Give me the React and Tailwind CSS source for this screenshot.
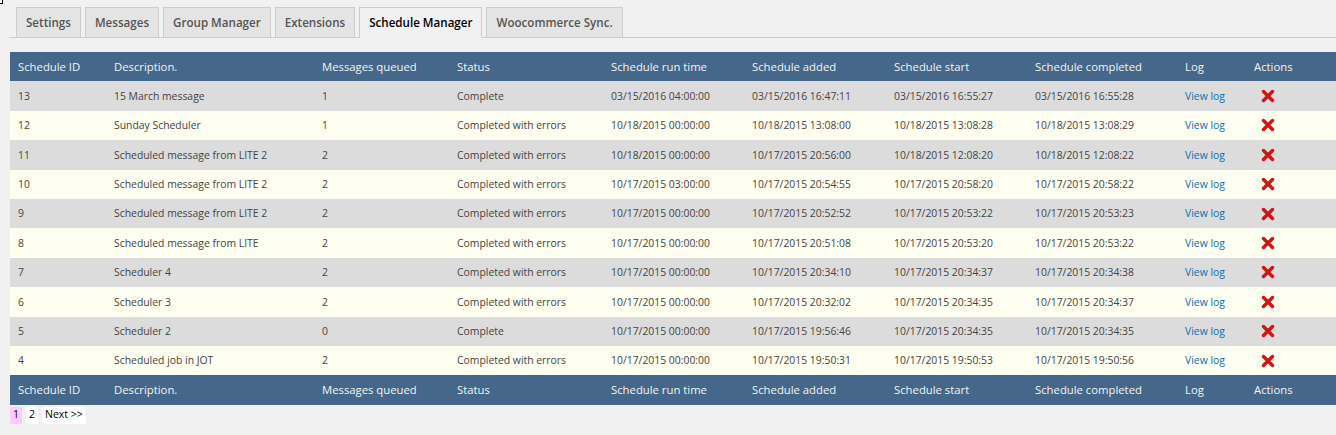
import React from 'react';

const tabs = ['Settings', 'Messages', 'Group Manager', 'Extensions', 'Schedule Manager', 'Woocommerce Sync.'];

const columns = [
  { label: 'Schedule ID', width: 'w-[96px]' },
  { label: 'Description.', width: 'w-[208px]' },
  { label: 'Messages queued', width: 'w-[135px]' },
  { label: 'Status', width: 'w-[154px]' },
  { label: 'Schedule run time', width: 'w-[141px]' },
  { label: 'Schedule added', width: 'w-[142px]' },
  { label: 'Schedule start', width: 'w-[141px]' },
  { label: 'Schedule completed', width: 'w-[150px]' },
  { label: 'Log', width: 'w-[69px]' },
  { label: 'Actions', width: 'w-[90px]' },
];

const schedules = [
  { id: 13, desc: '15 March message', queued: 1, status: 'Complete', run: '03/15/2016 04:00:00', added: '03/15/2016 16:47:11', start: '03/15/2016 16:55:27', done: '03/15/2016 16:55:28' },
  { id: 12, desc: 'Sunday Scheduler', queued: 1, status: 'Completed with errors', run: '10/18/2015 00:00:00', added: '10/18/2015 13:08:00', start: '10/18/2015 13:08:28', done: '10/18/2015 13:08:29' },
  { id: 11, desc: 'Scheduled message from LITE 2', queued: 2, status: 'Completed with errors', run: '10/18/2015 00:00:00', added: '10/17/2015 20:56:00', start: '10/18/2015 12:08:20', done: '10/18/2015 12:08:22' },
  { id: 10, desc: 'Scheduled message from LITE 2', queued: 2, status: 'Completed with errors', run: '10/17/2015 03:00:00', added: '10/17/2015 20:54:55', start: '10/17/2015 20:58:20', done: '10/17/2015 20:58:22' },
  { id: 9, desc: 'Scheduled message from LITE 2', queued: 2, status: 'Completed with errors', run: '10/17/2015 00:00:00', added: '10/17/2015 20:52:52', start: '10/17/2015 20:53:22', done: '10/17/2015 20:53:23' },
  { id: 8, desc: 'Scheduled message from LITE', queued: 2, status: 'Completed with errors', run: '10/17/2015 00:00:00', added: '10/17/2015 20:51:08', start: '10/17/2015 20:53:20', done: '10/17/2015 20:53:22' },
  { id: 7, desc: 'Scheduler 4', queued: 2, status: 'Completed with errors', run: '10/17/2015 00:00:00', added: '10/17/2015 20:34:10', start: '10/17/2015 20:34:37', done: '10/17/2015 20:34:38' },
  { id: 6, desc: 'Scheduler 3', queued: 2, status: 'Completed with errors', run: '10/17/2015 00:00:00', added: '10/17/2015 20:32:02', start: '10/17/2015 20:34:35', done: '10/17/2015 20:34:37' },
  { id: 5, desc: 'Scheduler 2', queued: 0, status: 'Complete', run: '10/17/2015 00:00:00', added: '10/17/2015 19:56:46', start: '10/17/2015 20:34:35', done: '10/17/2015 20:34:35' },
  { id: 4, desc: 'Scheduled job in JOT', queued: 2, status: 'Completed with errors', run: '10/17/2015 00:00:00', added: '10/17/2015 19:50:31', start: '10/17/2015 19:50:53', done: '10/17/2015 19:50:56' },
];

const DeleteIcon = () => (
  <svg width="14" height="14" viewBox="0 0 14 14" className="ml-[7px] block">
    <path d="M2.5 2.5 L11.5 11.5 M11.5 2.5 L2.5 11.5" stroke="#d11414" strokeWidth="3.4" strokeLinecap="round" />
  </svg>
);

const HeaderRow = () => (
  <tr className="bg-[#456789] h-[29.4px]">
    {columns.map(col => (
      <th key={col.label} className={`${col.width} px-2 pt-px text-left font-normal text-[11.3px] text-[#f4f4f4]`}>
        {col.label}
      </th>
    ))}
  </tr>
);

const App = () => {
  return (
    <div className="relative min-h-[435px] bg-[#f1f1f1] text-[#444] font-['Open_Sans',sans-serif]">
      <div className="absolute left-0 top-0 w-[3px] h-[4px] border-r border-b border-black" />

      {/* Tabs */}
      <div className="ml-[9px] pt-[7px] flex border-b border-[#cccccc]">
        <div className="flex gap-[4px] ml-[7px] -mb-px">
          {tabs.map(tab => {
            const active = tab === 'Schedule Manager';
            return (
              <div
                key={tab}
                className={`h-[31px] px-[9px] flex items-center text-[11.6px] font-semibold border border-[#cccccc] ${
                  active ? 'bg-[#f1f1f1] text-black border-b-[#f1f1f1]' : 'bg-[#e4e4e4] text-[#555]'
                }`}
              >
                {tab}
              </div>
            );
          })}
        </div>
      </div>

      {/* Schedule table */}
      <div className="ml-[10px] mt-[14px]">
        <table className="table-fixed w-[1326px] border-collapse">
          <thead>
            <HeaderRow />
          </thead>
          <tbody>
            {schedules.map((s, i) => (
              <tr key={s.id} className={`h-[29.4px] text-[10.4px] ${i % 2 === 0 ? 'bg-[#dcdcdc]' : 'bg-[#fefef1]'}`}>
                <td className="px-2 pt-px">{s.id}</td>
                <td className="px-2 pt-px">{s.desc}</td>
                <td className="px-2 pt-px">{s.queued}</td>
                <td className="px-2 pt-px">{s.status}</td>
                <td className="px-2 pt-px">{s.run}</td>
                <td className="px-2 pt-px">{s.added}</td>
                <td className="px-2 pt-px">{s.start}</td>
                <td className="px-2 pt-px">{s.done}</td>
                <td className="px-2 pt-px text-[#0a6fad]">View log</td>
                <td className="px-2"><DeleteIcon /></td>
              </tr>
            ))}
          </tbody>
          <tfoot>
            <HeaderRow />
          </tfoot>
        </table>

        {/* Pagination */}
        <div className="flex items-center gap-[4px] mt-[2px] text-[10.5px] text-black">
          <span className="px-[3px] h-[17px] flex items-center bg-[#ffccff]">1</span>
          <span className="px-[3px] h-[17px] flex items-center bg-white">2</span>
          <span className="px-[3px] h-[17px] flex items-center bg-white">Next &gt;&gt;</span>
        </div>
      </div>
    </div>
  );
};

export default App;
